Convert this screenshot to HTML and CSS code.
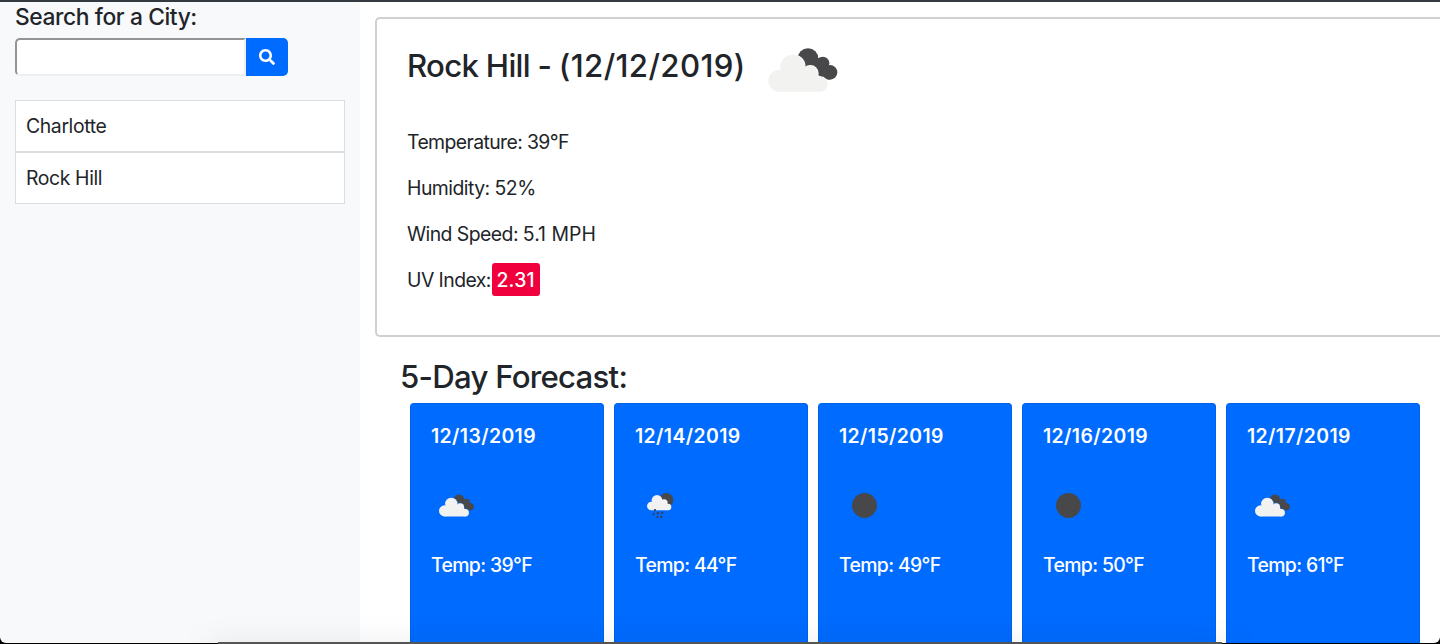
FILE: index.html
```
<!DOCTYPE html>
<html lang="en">
<head>
<meta charset="utf-8">
<title>Weather Dashboard</title>
<link rel="stylesheet" href="styles.css">
</head>
<body>
<svg class="defs" aria-hidden="true">
  <defs>
    <g id="cloud"><circle cx="117" cy="150" r="33"/><circle cx="157" cy="109" r="37"/><circle cx="210" cy="128" r="23"/><circle cx="240" cy="161" r="22"/><path d="M117 183V125L157 108L211 120L240 140V183Z"/></g>
    <mask id="behind" maskUnits="userSpaceOnUse" x="60" y="30" width="250" height="180"><rect x="60" y="30" width="250" height="180" fill="#fff"/><use href="#cloud" stroke="#000" stroke-width="4"/></mask>
    <symbol id="clouds" viewBox="84 52 208 132">
      <g fill="#48484a" mask="url(#behind)"><circle cx="203" cy="84" r="31"/><circle cx="247" cy="98" r="20"/><circle cx="269" cy="125" r="22"/><path d="M185 85L203 70L247 88L269 115L268 147L225 140L195 110Z"/></g>
      <use href="#cloud" fill="#f2f2f0"/>
    </symbol>
    <symbol id="rain" viewBox="0 0 81 78">
      <circle cx="58" cy="21" r="21" fill="#48484a"/>
      <g fill="#f2f2f2"><circle cx="13" cy="39" r="13"/><circle cx="30" cy="22" r="16"/><circle cx="51" cy="30" r="11"/><circle cx="63" cy="42" r="10"/><path d="M13 52V28L30 15L51 24L63 35V52Z"/></g>
      <path d="M24 48v6M21 60l-3 6M34 57l-3 7M47 56l-3 7M33 69l-3 6M44 69l-3 6" stroke="#3c3c42" stroke-width="5" fill="none"/>
    </symbol>
  </defs>
</svg>
<div class="navbar"></div>
<div class="layout">
  <aside class="sidebar">
    <h4 class="search-title">Search for a City:</h4>
    <div class="search">
      <input class="search-input" type="text" aria-label="City">
      <button class="search-button" aria-label="Search"><svg width="16" height="16" viewBox="0 0 512 512" fill="#fff"><path d="M505 442.700L405.300 343c-4.500-4.500-10.600-7-17-7H372c27.600-35.300 44-79.700 44-128C416 93.100 322.900 0 208 0S0 93.100 0 208s93.100 208 208 208c48.300 0 92.700-16.400 128-44v16.300c0 6.400 2.500 12.500 7 17l99.700 99.700c9.400 9.400 24.600 9.400 33.900 0l28.300-28.300c9.400-9.400 9.400-24.600.1-34zM208 336c-70.700 0-128-57.200-128-128 0-70.700 57.200-128 128-128 70.700 0 128 57.200 128 128 0 70.700-57.200 128-128 128z"/></svg></button>
    </div>
    <ul class="cities"><li>Charlotte</li><li>Rock Hill</li></ul>
  </aside>
  <main class="main">
    <section class="current">
      <div class="current-head"><h2>Rock Hill - <span class="date">(12/12/2019)</span></h2><svg class="current-icon"><use href="#clouds"/></svg></div>
      <p class="temperature">Temperature: 39°F</p>
      <p class="humidity">Humidity: 52%</p>
      <p class="wind">Wind Speed: <span class="speed">5.1 MPH</span></p>
      <p class="uv">UV Index:<span class="badge">2.31</span></p>
    </section>
    <h2 class="forecast-title">5-Day Forecast:</h2>
    <div class="forecast">
      <article class="card"><h5>12/13/2019</h5><div class="icon"><svg class="clouds"><use href="#clouds"/></svg></div><p>Temp: 39°F</p></article>
      <article class="card"><h5>12/14/2019</h5><div class="icon"><svg class="rain"><use href="#rain"/></svg></div><p>Temp: 44°F</p></article>
      <article class="card"><h5>12/15/2019</h5><div class="icon"><span class="clear"></span></div><p>Temp: 49°F</p></article>
      <article class="card"><h5>12/16/2019</h5><div class="icon"><span class="clear"></span></div><p>Temp: 50°F</p></article>
      <article class="card"><h5>12/17/2019</h5><div class="icon"><svg class="clouds"><use href="#clouds"/></svg></div><p>Temp: 61°F</p></article>
    </div>
  </main>
</div>
<div class="window-edge"></div>
<div class="dock"></div>
</body>
</html>
```
FILE: styles.css
```
* { box-sizing: border-box; }
body { margin: 0; height: 644px; overflow: hidden; position: relative; background: #fff; color: #212529; font: 400 19.4px/30px Inter, "Liberation Sans", sans-serif; letter-spacing: -0.38px; }
h2, h4, h5, p, ul { margin: 0; padding: 0; }
h2, h4, h5 { font-weight: 500; }
.defs { position: absolute; width: 0; height: 0; }
.navbar { height: 2px; background: #343a40; }
.layout { display: flex; height: 642px; }
.sidebar { flex: 0 0 360px; padding: 0 15px; background: #f8f9fb; }
.search-title { font-size: 22.8px; font-weight: 550; line-height: 30px; height: 36px; letter-spacing: -0.4px; white-space: nowrap; }
.search { display: flex; height: 38px; }
.search-input { width: 231px; height: 38px; border: 2px solid; border-color: #949494 #eee #eee #949494; border-radius: 5px 0 0 5px; background: #fff; padding: 0; outline: 0; }
.search-button { width: 42px; border: 0; border-radius: 0 5px 5px 0; background: #006bff; padding: 0; display: flex; align-items: center; justify-content: center; }
.cities { margin-top: 24px; list-style: none; }
.cities li { height: 52px; border: 1px solid #dcdddf; background: #fff; padding: 10px; }
.main { flex: 1; min-width: 0; padding: 15px 0 0 15px; }
.current { height: 320px; border: 2px solid #d0d0d0; border-right: 0; border-radius: 5px 0 0 5px; padding: 26px 30px 0; }
.current-head { display: flex; height: 82px; white-space: nowrap; }
.current-head h2 { width: 361px; font-size: 31.2px; font-weight: 550; line-height: 42px; letter-spacing: -0.7px; }
.current-head .date { letter-spacing: 0.38px; }
.current-icon { width: 70px; height: 44px; margin-top: 2.5px; }
.current p { height: 46px; white-space: nowrap; }
.current .temperature { letter-spacing: -0.6px; }
.current .humidity { letter-spacing: -0.52px; }
.current .wind { letter-spacing: -0.55px; }
.wind .speed { letter-spacing: 0.05px; }
.current .uv { display: flex; letter-spacing: -0.55px; }
.badge { height: 33px; line-height: 34px; margin: -2px 0 0 1.5px; padding: 0 5px 0 4px; border-radius: 3px; background: #f0003c; color: #fff; font-weight: 500; letter-spacing: 0.2px; }
.forecast-title { margin: 21px 0 0 25px; font-size: 31.2px; font-weight: 550; line-height: 38px; height: 45px; letter-spacing: -0.75px; }
.forecast { display: flex; gap: 10px; padding-left: 35px; height: 241px; }
.card { flex: 0 0 194px; height: 241px; border: 1px solid #0062ea; border-bottom: 0; border-radius: 4px 4px 0 0; background: #006bff; color: #fff; padding: 17px 20px 0; }
.card h5 { font-size: 19.4px; font-weight: 600; line-height: 30px; letter-spacing: 0.4px; }
.card p { letter-spacing: -0.65px; font-weight: 450; }
.icon { height: 99px; padding: 43px 0 0 8px; }
.icon svg, .clear { display: block; }
.clouds { width: 35px; height: 23px; }
.rain { width: 27px; height: 26px; margin: -1px 0 0 4px; }
.clear { width: 25px; height: 25px; margin: -1px 0 0 5px; border-radius: 50%; background: #48484a; }
.window-edge { position: absolute; inset: 0 0 1px; border-radius: 0 0 6px 6px; box-shadow: 0 0 0 8px #000; clip-path: inset(2px 0 -1px 0); pointer-events: none; }
.dock { position: absolute; left: 218px; top: 642px; width: 1004px; height: 2px; background: #555; box-shadow: 0 18px 36px 10px rgba(0,0,0,.13); }
```
